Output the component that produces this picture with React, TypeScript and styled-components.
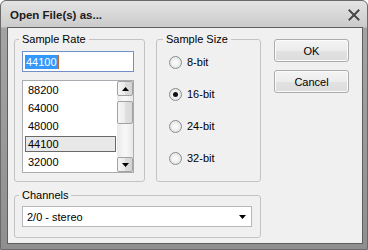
import React from "react";
import styled, { createGlobalStyle } from "styled-components";

const Global = createGlobalStyle`
  html, body { margin: 0; padding: 0; background: #ffffff; }
  body { font-family: "Liberation Sans", Arial, sans-serif; font-size: 11px; color: #000; }
  * { box-sizing: border-box; }
`;

const Window = styled.div`
  width: 368px;
  height: 250px;
  border: 1px solid #6a6a6a;
  border-radius: 6px 6px 0 0;
  background: linear-gradient(to bottom, #e4e4e4 0px, #cbcbcb 26px, #a4a4a4 27px, #8f8f8f 100%);
  display: flex;
  flex-direction: column;
  overflow: hidden;
`;

const TitleBar = styled.div`
  height: 26px;
  flex: none;
  display: flex;
  align-items: center;
  justify-content: space-between;
  padding: 1px 7px 0 9px;
`;

const Title = styled.div`
  font-weight: bold;
  font-size: 11.5px;
  color: #1c1c1c;
`;

const CloseIcon = () => (
  <svg width="12" height="12" viewBox="0 0 12 12">
    <path d="M1.5 1.5 L10.5 10.5 M10.5 1.5 L1.5 10.5" stroke="#f4f4f4" strokeWidth="3.6" strokeLinecap="round" opacity="0.5" />
    <path d="M1.5 1.5 L10.5 10.5 M10.5 1.5 L1.5 10.5" stroke="#4a4a4a" strokeWidth="2.2" strokeLinecap="square" />
  </svg>
);

const Client = styled.div`
  flex: 1;
  margin: 0 4px 5px 6px;
  border: 1px solid #5e5e5e;
  background: #f0f0f0;
  display: flex;
  gap: 13px;
  padding: 5px 0 0 6px;
`;

const Groups = styled.div`
  width: 247px;
  display: grid;
  grid-template-columns: 131px 105px;
  grid-template-rows: 149px 49px;
  column-gap: 11px;
  row-gap: 7px;
`;

const Group = styled.fieldset<{ $span?: boolean; $pad: string }>`
  margin: 0;
  min-width: 0;
  border: 1px solid #c3c3c3;
  border-radius: 3px;
  padding: ${(p) => p.$pad};
  grid-column: ${(p) => (p.$span ? "1 / span 2" : "auto")};
  display: flex;
  flex-direction: column;
`;

const Legend = styled.legend`
  padding: 0 3px;
  margin-left: -3px;
  line-height: 13px;
  font-size: 11px;
  color: #000;
`;

const TextInput = styled.div`
  width: 112px;
  height: 21px;
  flex: none;
  border: 1px solid #7191c6;
  background: #fff;
  display: flex;
  align-items: center;
  padding-left: 2px;
`;

const Selection = styled.span`
  background: #3399ff;
  color: #fff;
  line-height: 14px;
  padding: 0 1px;
`;

const Caret = styled.span`
  width: 1px;
  height: 14px;
  background: #b8682a;
`;

const ListBox = styled.div`
  width: 112px;
  height: 93px;
  flex: none;
  margin-top: 8px;
  border: 1px solid #a9abb0;
  background: #fff;
  display: flex;
  overflow: hidden;
`;

const Items = styled.div`
  flex: 1;
  padding: 0 1px 0 2px;
  display: flex;
  flex-direction: column;
`;

const Item = styled.div<{ $selected?: boolean }>`
  height: 16px;
  flex: none;
  margin: 1px 0;
  padding-left: 2px;
  line-height: 14px;
  border: 1px solid ${(p) => (p.$selected ? "#6a6a6a" : "transparent")};
  background: ${(p) => (p.$selected ? "#e8e8e8" : "transparent")};
`;

const ScrollBar = styled.div`
  width: 16px;
  flex: none;
  display: flex;
  flex-direction: column;
  background: linear-gradient(to right, #e8e8e8, #f6f6f6 40%, #f6f6f6 60%, #e8e8e8);
`;

const ScrollButton = styled.div`
  height: 15px;
  flex: none;
  border: 1px solid #a2a2a2;
  border-radius: 2px;
  background: linear-gradient(to right, #f6f6f6, #e9e9e9 50%, #dcdcdc 51%, #d4d4d4);
  display: flex;
  align-items: center;
  justify-content: center;
`;

const Thumb = styled.div`
  height: 23px;
  flex: none;
  margin-top: 5px;
  border: 1px solid #a2a2a2;
  border-radius: 2px;
  background: linear-gradient(to right, #f6f6f6, #ececec 50%, #e0e0e0 51%, #d8d8d8);
`;

const Track = styled.div`
  flex: 1;
`;

const Arrow = ({ up }: { up?: boolean }) => (
  <svg width="7" height="4" viewBox="0 0 7 4">
    <path d={up ? "M0 4 L3.5 0 L7 4 Z" : "M0 0 L7 0 L3.5 4 Z"} fill="#000" />
  </svg>
);

const RadioRow = styled.div`
  height: 16px;
  display: flex;
  align-items: center;
  gap: 5px;
  padding-left: 12px;
  & + & { margin-top: 16px; }
`;

const RadioCircle = styled.span<{ $checked?: boolean }>`
  width: 13px;
  height: 13px;
  border-radius: 50%;
  border: 1px solid #8b8d8f;
  background: radial-gradient(circle at 50% 50%, #ffffff 0%, #f0f0f0 45%, #d6d6d6 100%);
  display: flex;
  align-items: center;
  justify-content: center;
  &::after {
    content: "";
    width: 5px;
    height: 5px;
    border-radius: 50%;
    background: #111;
    display: ${(p) => (p.$checked ? "block" : "none")};
  }
`;

const Select = styled.div`
  width: 230px;
  height: 21px;
  border: 1px solid #b5b7bc;
  background: #fff;
  display: flex;
  align-items: center;
  justify-content: space-between;
  padding: 0 5px 0 4px;
`;

const Buttons = styled.div`
  display: flex;
  flex-direction: column;
  gap: 8px;
  padding-top: 6px;
`;

const Button = styled.div`
  width: 75px;
  height: 23px;
  border: 1px solid #acacac;
  border-radius: 3px;
  background: linear-gradient(to bottom, #f4f4f4, #ececec 50%, #e2e2e2 51%, #dcdcdc);
  display: flex;
  align-items: center;
  justify-content: center;
  box-shadow: inset 0 0 0 1px #fbfbfb;
`;

const rates = ["88200", "64000", "48000", "44100", "32000"];
const sizes = ["8-bit", "16-bit", "24-bit", "32-bit"];

export default function App() {
  return (
    <>
      <Global />
      <Window>
        <TitleBar>
          <Title>Open File(s) as...</Title>
          <CloseIcon />
        </TitleBar>
        <Client>
          <Groups>
            <Group $pad="5px 7px 7px 7px">
              <Legend>Sample Rate</Legend>
              <TextInput>
                <Selection>44100</Selection>
                <Caret />
              </TextInput>
              <ListBox>
                <Items>
                  {rates.map((r) => (
                    <Item key={r} $selected={r === "44100"}>
                      {r}
                    </Item>
                  ))}
                </Items>
                <ScrollBar>
                  <ScrollButton>
                    <Arrow up />
                  </ScrollButton>
                  <Thumb />
                  <Track />
                  <ScrollButton>
                    <Arrow />
                  </ScrollButton>
                </ScrollBar>
              </ListBox>
            </Group>
            <Group $pad="8px 7px 7px 0">
              <Legend style={{ marginLeft: 6 }}>Sample Size</Legend>
              {sizes.map((s) => (
                <RadioRow key={s}>
                  <RadioCircle $checked={s === "16-bit"} />
                  {s}
                </RadioRow>
              ))}
            </Group>
            <Group $span $pad="4px 7px 9px 7px">
              <Legend>Channels</Legend>
              <Select>
                <span>2/0 - stereo</span>
                <Arrow />
              </Select>
            </Group>
          </Groups>
          <Buttons>
            <Button>OK</Button>
            <Button>Cancel</Button>
          </Buttons>
        </Client>
      </Window>
    </>
  );
}
